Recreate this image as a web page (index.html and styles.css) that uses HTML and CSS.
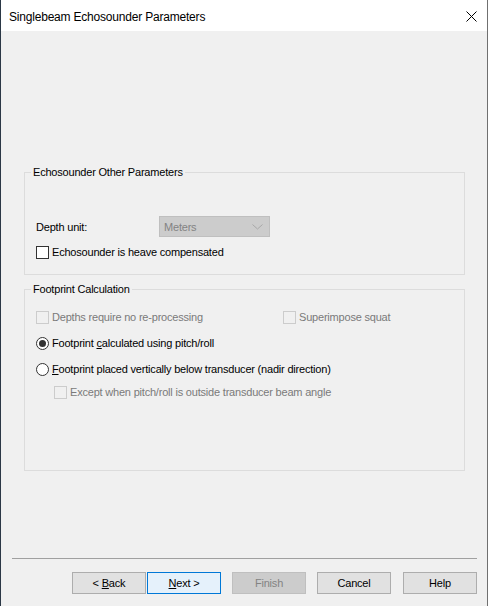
FILE: index.html
```html
<!DOCTYPE html>
<html lang="en">
<head>
    <meta charset="UTF-8">
    <meta name="viewport" content="width=device-width, initial-scale=1.0">
    <title>Singlebeam Echosounder Parameters</title>
    <link rel="stylesheet" href="styles.css">
</head>

<body>
    <div class="window">
        <div class="titlebar">
            <span class="title">Singlebeam Echosounder Parameters</span>
            <svg class="close" width="11" height="11" viewBox="0 0 11 11">
                <path d="M0.5 0.5 L10.5 10.5 M10.5 0.5 L0.5 10.5" stroke="#000" stroke-width="1" fill="none"/>
            </svg>
        </div>

        <div class="dialog-body">
            <div class="page">
                <fieldset class="group group-other">
                    <legend>Echosounder Other Parameters</legend>
                    <div class="depth-row">
                        <span class="field-label">Depth unit:</span>
                        <div class="combo disabled">
                            <span>Meters</span>
                            <svg width="11" height="6" viewBox="0 0 11 6">
                                <path d="M0.5 0.5 L5.5 5 L10.5 0.5" stroke="#a8a8a8" stroke-width="1" fill="none"/>
                            </svg>
                        </div>
                    </div>
                    <div class="option heave">
                        <span class="box"></span>
                        <span>Echosounder is heave compensated</span>
                    </div>
                </fieldset>

                <fieldset class="group group-footprint">
                    <legend>Footprint Calculation</legend>
                    <div class="option-pair">
                        <div class="option disabled">
                            <span class="box"></span>
                            <span>Depths require no re-processing</span>
                        </div>
                        <div class="option disabled">
                            <span class="box"></span>
                            <span>Superimpose squat</span>
                        </div>
                    </div>
                    <div class="option radio-row">
                        <span class="radio checked"></span>
                        <span>Footprint <u>c</u>alculated using pitch/roll</span>
                    </div>
                    <div class="option radio-row">
                        <span class="radio"></span>
                        <span><u>F</u>ootprint placed vertically below transducer (nadir direction)</span>
                    </div>
                    <div class="option disabled indented">
                        <span class="box"></span>
                        <span>Except when pitch/roll is outside transducer beam angle</span>
                    </div>
                </fieldset>
            </div>

            <div class="separator"></div>

            <div class="buttons">
                <button class="btn btn-back">&lt; <u>B</u>ack</button>
                <button class="btn btn-default"><u>N</u>ext &gt;</button>
                <button class="btn btn-finish" disabled>Finish</button>
                <button class="btn btn-cancel">Cancel</button>
                <button class="btn">Help</button>
            </div>
        </div>
    </div>
</body>
</html>
```

FILE: styles.css
```css
html,
body {
    margin: 0;
    height: 100%;
}

body {
    background-color: #f0f0f0;
    font-family: 'Liberation Sans', Arial, sans-serif;
    font-size: 11px;
    letter-spacing: -0.2px;
    color: #000;
}

.window {
    box-sizing: border-box;
    height: 606px;
    display: flex;
    flex-direction: column;
    border-left: 1px solid #2b3846;
    border-right: 1px solid #707070;
    background-color: #f0f0f0;
}

.titlebar {
    height: 31px;
    flex: none;
    display: flex;
    align-items: center;
    justify-content: space-between;
    padding: 0 10px 0 8px;
    background-color: #fff;
}

.title {
    font-size: 12px;
    line-height: 14px;
    padding-top: 2px;
}

.close {
    display: block;
    margin-top: 1px;
}

.dialog-body {
    flex: 1;
    display: flex;
    flex-direction: column;
}

.page {
    flex: 1;
    padding: 135px 22px 0 23px;
}

.group {
    margin: 0;
    padding: 0 6px;
    border: 1px solid #dcdcdc;
    min-width: 0;
}

.group legend {
    padding: 0 2px;
    line-height: 13px;
}

.group-other {
    padding-bottom: 15px;
}

.group-footprint {
    margin-top: 8px;
    padding-bottom: 71px;
}

.depth-row {
    display: flex;
    align-items: center;
    margin: 37px 0 0 5px;
}

.field-label {
    width: 123px;
}

.combo {
    box-sizing: border-box;
    width: 111px;
    height: 21px;
    display: flex;
    align-items: center;
    justify-content: space-between;
    padding: 0 6px 0 4px;
    border: 1px solid #bfbfbf;
}

.combo.disabled {
    background-color: #cccccc;
    color: #838383;
}

.option {
    display: flex;
    align-items: center;
    height: 13px;
    line-height: 13px;
    margin-left: 5px;
}

.option .box,
.option .radio {
    box-sizing: border-box;
    flex: none;
    width: 13px;
    height: 13px;
    margin-right: 3px;
    border: 1px solid #333;
    background-color: #fff;
}

.option .radio {
    border-radius: 50%;
    position: relative;
}

.option .radio.checked::after {
    content: "";
    position: absolute;
    left: 2px;
    top: 2px;
    width: 7px;
    height: 7px;
    border-radius: 50%;
    background-color: #333;
}

.option.disabled {
    color: #7a7a7a;
}

.option.disabled .box {
    border-color: #cccccc;
    background-color: #f0f0f0;
}

.heave {
    margin-top: 9px;
}

.option-pair {
    display: grid;
    grid-template-columns: 247px auto;
    margin: 15px 0 0 5px;
}

.option-pair .option {
    margin-left: 0;
}

.radio-row {
    margin-top: 13px;
}

.indented {
    margin: 10px 0 0 23px;
}

.separator {
    height: 1px;
    margin: 0 10px 0 11px;
    background-color: #a0a0a0;
}

.buttons {
    display: flex;
    justify-content: flex-end;
    gap: 11px;
    padding: 13px 10px 12px 0;
}

.btn {
    box-sizing: border-box;
    width: 74px;
    height: 22px;
    margin: 0;
    padding: 0;
    font-family: inherit;
    font-size: 11px;
    letter-spacing: -0.2px;
    color: #000;
    background-color: #e1e1e1;
    border: 1px solid #adadad;
    border-radius: 0;
}

.btn-back {
    margin-right: -10px;
}

.btn-default {
    background-color: #e5f1fb;
    border-color: #0078d7;
}

.btn-finish {
    background-color: #cccccc;
    border-color: #bfbfbf;
    color: #838383;
}

.btn-cancel {
    margin-right: 1px;
}
```
